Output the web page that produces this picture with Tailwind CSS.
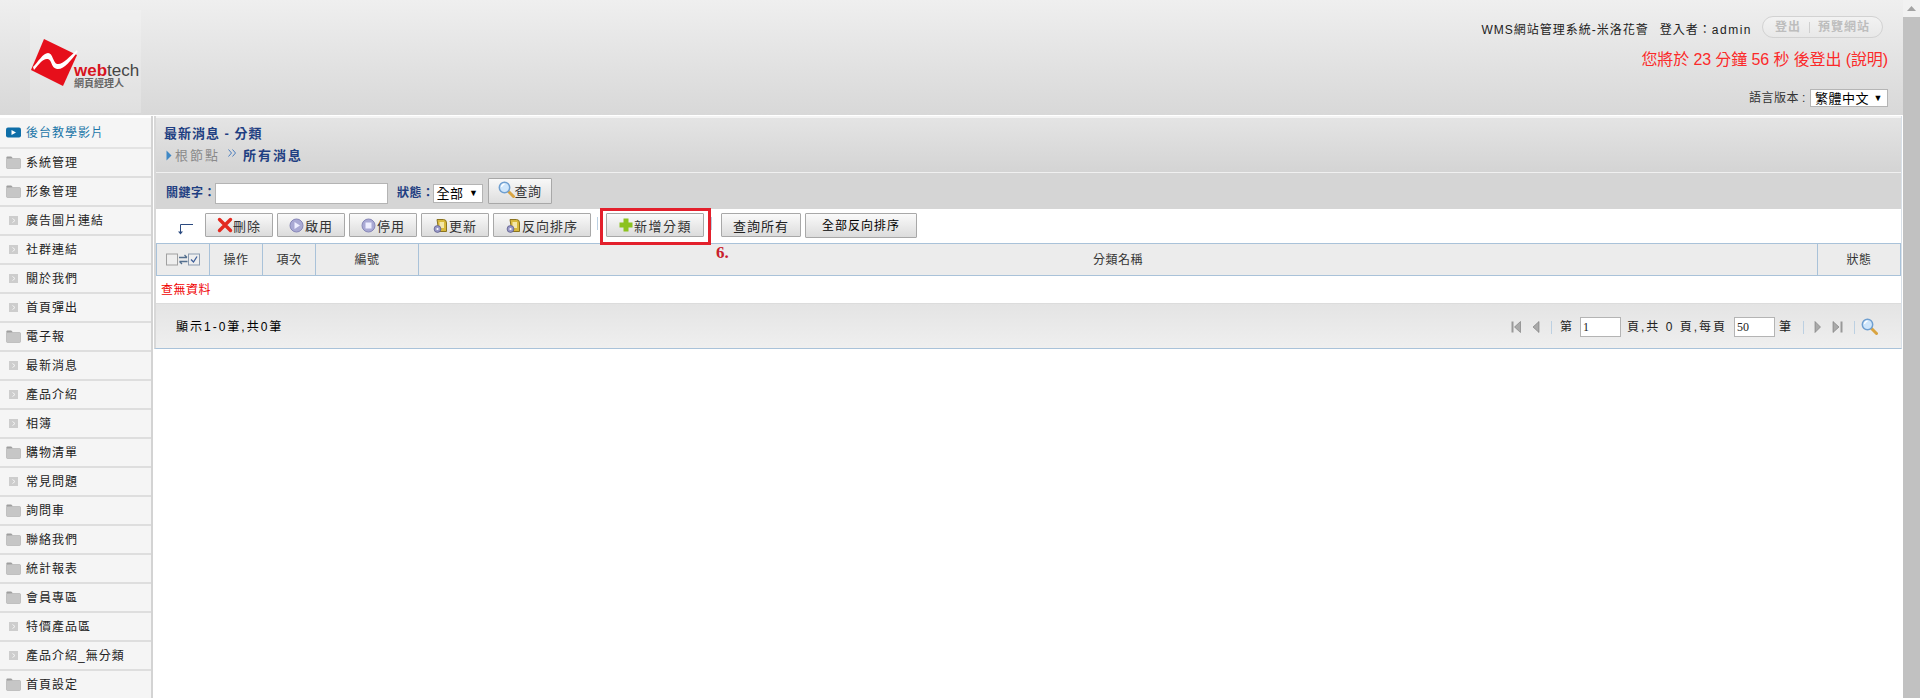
<!DOCTYPE html>
<html lang="zh-Hant">
<head>
<meta charset="utf-8">
<script src="https://cdn.jsdelivr.net/npm/@tailwindcss/browser@4"></script>
<title>WMS</title>
</head>
<body class="font-['Liberation_Sans','Noto_Sans_CJK_TC',sans-serif] text-[12px] leading-none text-black bg-white">
<svg width="0" height="0" class="absolute">
  <defs>
    <symbol id="folder" viewBox="0 0 15 13"><path d="M0.500 3V1.200Q0.500 0.500 1.200 0.500H5Q5.600 0.500 6 1.200L6.600 2.500Z" fill="#9e9e9e"/><rect x="0.500" y="2.500" width="14" height="10" rx="1" fill="#c6c6c6" stroke="#adadad" stroke-width="0.600"/></symbol>
    <symbol id="doc" viewBox="0 0 9 9"><rect width="9" height="9" fill="#cdcdcd"/><path d="M3.500 2.500L6 4.500L3.500 6.500" fill="none" stroke="#f4f4f4" stroke-width="1"/></symbol>
    <symbol id="mag" viewBox="0 0 17 17"><path d="M10.500 10.500L15.500 15.500" stroke="#d9a441" stroke-width="3" stroke-linecap="round"/><circle cx="6.500" cy="6.500" r="5.200" fill="#cfe6fb" stroke="#6f9fd0" stroke-width="1.500"/><path d="M3.500 6Q4 3.500 6.500 3.200" stroke="#fff" stroke-width="1.200" fill="none"/></symbol>
    <symbol id="gold" viewBox="0 0 15 15"><path d="M4 1.500H10.500Q13.500 1.500 13.500 5V13.500H5V8Z" fill="#d9b93c" stroke="#8a7320" stroke-width="1"/><path d="M6.500 4H11V10H6.500Z" fill="#f4e7a8"/><circle cx="4.500" cy="11" r="3.400" fill="#9a9ac8" stroke="#5c5c8c" stroke-width="0.800"/><circle cx="4.500" cy="11" r="1.100" fill="#fff"/></symbol>
  </defs>
</svg>
<div class="flex h-[698px] overflow-hidden">
  <div class="relative w-[1903px] shrink-0 flex flex-col">
    <!-- header -->
    <header class="h-[115px] shrink-0 flex justify-between bg-gradient-to-b from-[#efefef] to-[#d8d8d8]">
      <div class="ml-[30px] mt-[10px] w-[111px] h-[103px] bg-white/20 relative">
        <svg viewBox="0 0 111 103" class="w-[111px] h-[103px]">
          <path d="M14 29L47 45L33 76L1 60Z" fill="#e60f1b"/>
          <path d="M3 57C8 52 13 43 18 43C23 43 23 53 27 54C33 55 39 47 47 40L47.500 42C41 50 34 60 27 59C21 58 22 50 18 49C13 48 9 54 4 60Z" fill="#fff"/>
          <text x="44" y="66" font-family="Liberation Sans" font-size="17" fill="#444"><tspan font-weight="700" fill="#d8141e">web</tspan><tspan>tech</tspan></text>
          <text x="44" y="77" font-family="Noto Sans CJK TC" font-size="10" font-weight="700" fill="#666">網頁經理人</text>
        </svg>
      </div>
      <div class="w-[440px] mr-[15px] flex flex-col items-end">
        <div class="mt-[16px] h-[22px] flex items-center pr-[5px] text-[#222]">
          <span class="mt-[6px] tracking-[1px]">WMS</span><span class="mt-[6px] tracking-[1px]">網站管理系統-米洛花薈</span><span class="mt-[6px] ml-[11px] tracking-[1px]">登入者：</span><span class="mt-[6px] tracking-[1.500px]">admin</span>
          <div class="ml-[10px] w-[121px] h-[22px] rounded-full border border-[#d2d2d2] bg-gradient-to-b from-[#f2f2f2] to-[#e8e8e8] flex items-center justify-center text-[#bdbdbd] font-bold tracking-[1px]">
            <span>登出</span><span class="mx-[8px] w-px h-[11px] bg-[#cfcfcf]"></span><span>預覽網站</span>
          </div>
        </div>
        <div class="mt-[12px] text-[16px] text-[#fb2a2a] leading-[20px] tracking-[-0.1px]">您將於 23 分鐘 56 秒 後登出 (說明)</div>
        <div class="mt-[19px] flex items-center">
          <span class="tracking-[0.5px] text-[#333]">語言版本</span><span class="ml-[3px] w-[4px] text-[#333]">:</span>
          <div class="ml-[4px] w-[78px] h-[18px] bg-white border border-[#b5b5b5] flex items-center justify-between px-[4px] text-[13px] tracking-[0.5px]">繁體中文<span class="text-[9px]">▼</span></div>
        </div>
      </div>
    </header>
    <div class="flex-1 flex min-h-0">
      <!-- sidebar -->
      <nav class="w-[154px] shrink-0 pt-[1px] overflow-hidden bg-white">
        <div class="w-[153px] border-r-2 border-[#d3d3d3] bg-[#f5f5f5] flex flex-col tracking-[1px] text-[#222]">
          <a class="h-[33px] border-y-2 border-[#e3e3e3] border-t-white flex items-center pl-[6px] text-[#1b75a8]"><svg width="15" height="11" viewBox="0 0 15 11" class="mr-[5px]"><rect width="15" height="10" y="0.500" rx="2" fill="#0e6ea8"/><path d="M5.500 3L10 5.500L5.500 8Z" fill="#fff"/></svg>後台教學影片</a>
          <a class="h-[29px] border-b-2 border-[#dedede] flex items-center pl-[6px]"><svg width="15" height="13" class="mr-[5px]"><use href="#folder"/></svg>系統管理</a>
          <a class="h-[29px] border-b-2 border-[#dedede] flex items-center pl-[6px]"><svg width="15" height="13" class="mr-[5px]"><use href="#folder"/></svg>形象管理</a>
          <a class="h-[29px] border-b-2 border-[#dedede] flex items-center pl-[9px]"><svg width="9" height="9" class="mr-[8px]"><use href="#doc"/></svg>廣告圖片連結</a>
          <a class="h-[29px] border-b-2 border-[#dedede] flex items-center pl-[9px]"><svg width="9" height="9" class="mr-[8px]"><use href="#doc"/></svg>社群連結</a>
          <a class="h-[29px] border-b-2 border-[#dedede] flex items-center pl-[9px]"><svg width="9" height="9" class="mr-[8px]"><use href="#doc"/></svg>關於我們</a>
          <a class="h-[29px] border-b-2 border-[#dedede] flex items-center pl-[9px]"><svg width="9" height="9" class="mr-[8px]"><use href="#doc"/></svg>首頁彈出</a>
          <a class="h-[29px] border-b-2 border-[#dedede] flex items-center pl-[6px]"><svg width="15" height="13" class="mr-[5px]"><use href="#folder"/></svg>電子報</a>
          <a class="h-[29px] border-b-2 border-[#dedede] flex items-center pl-[9px]"><svg width="9" height="9" class="mr-[8px]"><use href="#doc"/></svg>最新消息</a>
          <a class="h-[29px] border-b-2 border-[#dedede] flex items-center pl-[9px]"><svg width="9" height="9" class="mr-[8px]"><use href="#doc"/></svg>產品介紹</a>
          <a class="h-[29px] border-b-2 border-[#dedede] flex items-center pl-[9px]"><svg width="9" height="9" class="mr-[8px]"><use href="#doc"/></svg>相簿</a>
          <a class="h-[29px] border-b-2 border-[#dedede] flex items-center pl-[6px]"><svg width="15" height="13" class="mr-[5px]"><use href="#folder"/></svg>購物清單</a>
          <a class="h-[29px] border-b-2 border-[#dedede] flex items-center pl-[9px]"><svg width="9" height="9" class="mr-[8px]"><use href="#doc"/></svg>常見問題</a>
          <a class="h-[29px] border-b-2 border-[#dedede] flex items-center pl-[6px]"><svg width="15" height="13" class="mr-[5px]"><use href="#folder"/></svg>詢問車</a>
          <a class="h-[29px] border-b-2 border-[#dedede] flex items-center pl-[6px]"><svg width="15" height="13" class="mr-[5px]"><use href="#folder"/></svg>聯絡我們</a>
          <a class="h-[29px] border-b-2 border-[#dedede] flex items-center pl-[6px]"><svg width="15" height="13" class="mr-[5px]"><use href="#folder"/></svg>統計報表</a>
          <a class="h-[29px] border-b-2 border-[#dedede] flex items-center pl-[6px]"><svg width="15" height="13" class="mr-[5px]"><use href="#folder"/></svg>會員專區</a>
          <a class="h-[29px] border-b-2 border-[#dedede] flex items-center pl-[9px]"><svg width="9" height="9" class="mr-[8px]"><use href="#doc"/></svg>特價產品區</a>
          <a class="h-[29px] border-b-2 border-[#dedede] flex items-center pl-[9px]"><svg width="9" height="9" class="mr-[8px]"><use href="#doc"/></svg>產品介紹_無分類</a>
          <a class="h-[29px] border-b-2 border-[#dedede] flex items-center pl-[6px]"><svg width="15" height="13" class="mr-[5px]"><use href="#folder"/></svg>首頁設定</a>
        </div>
      </nav>
      <!-- main -->
      <main class="flex-1 min-w-0 pr-[1px] pt-[1px]">
        <div class="h-[233px] border-l-2 border-[#d8d8d8] border-b-[1px] border-b-[#a9c2d9] border-r border-r-[#d8e0e8] flex flex-col">
          <div class="h-[56px] shrink-0 border-t-2 border-[#f4f4f4] bg-gradient-to-b from-[#e4e4e4] to-[#d4d4d4] pl-[8px] text-[#1f3f82] font-bold tracking-[1px]">
            <div class="mt-[8px] text-[13px] leading-[15px]">最新消息 - 分類</div>
            <div class="mt-[7px] flex items-center text-[13px] leading-[15px]">
              <svg width="6" height="11" viewBox="0 0 6 11" class="ml-[2px] mr-[3px]"><path d="M0.500 0.500L5.500 5.500L0.500 10.500Z" fill="#3f88c5"/></svg>
              <span class="font-normal text-[#8a8a8a] tracking-[2px]">根節點</span>
              <svg width="9" height="8" viewBox="0 0 9 8" class="ml-[8px] mr-[6px] -mt-[5px]"><path d="M0.500 0.500L3.500 4L0.500 7.500M4.500 0.500L7.500 4L4.500 7.500" fill="none" stroke="#4b7dbd" stroke-width="1"/></svg>
              <span class="tracking-[2px]">所有消息</span>
            </div>
          </div>
          <div class="h-[37px] shrink-0 border-t border-[#f0f0f0] bg-[#d5d5d5] flex items-start pl-[10px] text-[#1f3f82] font-bold tracking-[0.5px]">
            <span class="mt-[14px]">關鍵字：</span>
            <div class="mt-[10px] w-[173px] h-[21px] -ml-[1px] bg-white border border-[#b4b4b4]"></div>
            <span class="mt-[14px] ml-[9px]">狀態：</span>
            <div class="mt-[11px] w-[50px] h-[19px] -ml-[2px] bg-white border border-[#b4b4b4] flex items-center justify-between px-[3px] text-[13px] text-black font-normal">全部<span class="text-[9px]">▼</span></div>
            <button class="mt-[5px] ml-[5px] w-[64px] h-[26px] border border-[#a8a8a8] rounded-[1px] bg-gradient-to-b from-[#f8f8f8] to-[#dedede] flex items-center justify-center text-[#333] font-normal text-[13px] tracking-[0.5px]"><svg width="17" height="17" class="-mt-[4px]"><use href="#mag"/></svg>查詢</button>
          </div>
          <div class="relative h-[34px] shrink-0 bg-white flex items-start pt-[4px] tracking-[1px] text-[13px] text-[#333]">
            <svg width="17" height="12" viewBox="0 0 17 12" class="ml-[21px] mt-[10px] mr-[11px]"><path d="M16 1.500H3.500V9" fill="none" stroke="#2b4a80" stroke-width="1"/><path d="M1 8.500H6L3.500 11.500Z" fill="#2b4a80"/></svg>
            <button class="w-[68px] h-[24px] pt-[2px] border border-[#a8a8a8] rounded-[1px] bg-gradient-to-b from-[#fafafa] to-[#dcdcdc] flex items-center justify-center"><svg width="16" height="16" viewBox="0 0 16 16" class="-mt-[2px]"><path d="M2.500 2.500L13.500 13.500M13.500 2.500L2.500 13.500" stroke="#e32a20" stroke-width="3.400" stroke-linecap="round"/></svg>刪除</button>
            <button class="ml-[4px] w-[68px] h-[24px] pt-[2px] border border-[#a8a8a8] rounded-[1px] bg-gradient-to-b from-[#fafafa] to-[#dcdcdc] flex items-center justify-center"><svg width="15" height="15" viewBox="0 0 15 15" class="mr-[1px] -mt-[2px]"><circle cx="7.500" cy="7.500" r="6.500" fill="#a9a9d4" stroke="#8787b8"/><path d="M5.500 4L11 7.500L5.500 11Z" fill="#eef" /></svg>啟用</button>
            <button class="ml-[4px] w-[68px] h-[24px] pt-[2px] border border-[#a8a8a8] rounded-[1px] bg-gradient-to-b from-[#fafafa] to-[#dcdcdc] flex items-center justify-center"><svg width="15" height="15" viewBox="0 0 15 15" class="mr-[1px] -mt-[2px]"><circle cx="7.500" cy="7.500" r="6.500" fill="#a9a9d4" stroke="#8787b8"/><rect x="4.500" y="4.500" width="6" height="6" fill="#eef"/></svg>停用</button>
            <button class="ml-[4px] w-[68px] h-[24px] pt-[2px] border border-[#a8a8a8] rounded-[1px] bg-gradient-to-b from-[#fafafa] to-[#dcdcdc] flex items-center justify-center"><svg width="15" height="15" class="mr-[1px] -mt-[2px]"><use href="#gold"/></svg>更新</button>
            <button class="ml-[4px] w-[98px] h-[24px] pt-[2px] border border-[#a8a8a8] rounded-[1px] bg-gradient-to-b from-[#fafafa] to-[#dcdcdc] flex items-center justify-center"><svg width="15" height="15" class="mr-[1px] -mt-[2px]"><use href="#gold"/></svg>反向排序</button>
            <span class="ml-[6px] mt-[4px] w-px h-[13px] bg-[#bcd0e2]"></span>
            <button class="ml-[8px] w-[98px] h-[24px] pt-[2px] border border-[#a8a8a8] rounded-[1px] bg-gradient-to-b from-[#fafafa] to-[#dcdcdc] flex items-center justify-center tracking-[1.500px]"><svg width="16" height="16" viewBox="0 0 16 16" class="-mt-[2px]"><path d="M8 1.500V14.500M1.500 8H14.500" stroke="#8cc21f" stroke-width="5"/></svg>新增分類</button>
            <span class="ml-[7px] mt-[4px] w-px h-[13px] bg-[#bcd0e2]"></span>
            <button class="ml-[9px] w-[80px] h-[24px] pt-[2px] border border-[#a8a8a8] rounded-[1px] bg-gradient-to-b from-[#fafafa] to-[#dcdcdc] text-[#222]">查詢所有</button>
            <button class="ml-[4px] w-[112px] h-[25px] border border-[#a8a8a8] rounded-[1px] bg-gradient-to-b from-[#fafafa] to-[#dcdcdc] text-black text-[12px]">全部反向排序</button>
            <div class="absolute left-[444px] top-[-1px] w-[111px] h-[37px] border-[3px] border-[#e3202c]"></div>
            <span class="absolute left-[560px] top-[35px] text-[17px] font-bold text-[#c8202c] font-['Liberation_Serif',serif] tracking-normal">6.</span>
          </div>
          <div class="h-[33px] shrink-0 bg-[#ececec] border-y border-[#a9c2d9] border-x flex items-center text-center text-[#333] tracking-[0.5px]">
            <div class="w-[53px] h-full border-r border-[#a9c2d9] flex items-center justify-center">
              <svg width="34" height="13" viewBox="0 0 34 13"><rect x="0.500" y="1" width="11" height="11" fill="#eee" stroke="#a0a0a0"/><path d="M13 4.500H21M18.500 2L21 4.500M21.500 8.500H13.500M16 11L13.500 8.500" fill="none" stroke="#55708f" stroke-width="1.300"/><rect x="22.500" y="1" width="11" height="11" fill="#eee" stroke="#8b9bb0"/><path d="M25 6.500L27.500 9L31 3.500" fill="none" stroke="#3f5f9a" stroke-width="1.300"/></svg>
            </div>
            <div class="w-[53px] h-full border-r border-[#a9c2d9] flex items-center justify-center">操作</div>
            <div class="w-[53px] h-full border-r border-[#a9c2d9] flex items-center justify-center">項次</div>
            <div class="w-[103px] h-full border-r border-[#a9c2d9] flex items-center justify-center">編號</div>
            <div class="flex-1 h-full border-r border-[#a9c2d9] flex items-center justify-center">分類名稱</div>
            <div class="w-[82px] h-full flex items-center justify-center">狀態</div>
          </div>
          <div class="h-[27px] shrink-0 pl-[5px] flex items-center bg-white text-[#f00000] tracking-[0.5px]">查無資料</div>
          <div class="h-px shrink-0 bg-[#dcdcdc]"></div>
          <div class="flex-1 bg-gradient-to-b from-[#e4e4e4] to-[#efefef] flex items-center justify-between pt-[2px] pl-[20px] pr-[23px] text-[#222] tracking-[1px]">
            <span class="tracking-[2px] text-black">顯示1-0筆,共0筆</span>
            <div class="flex items-center">
              <svg width="11" height="12" viewBox="0 0 11 12"><rect x="0.500" y="0.500" width="2" height="11" fill="#999"/><path d="M9.500 0.500L3.500 6L9.500 11.500Z" fill="#aaa" stroke="#777" stroke-width="0.600"/></svg>
              <svg width="8" height="12" viewBox="0 0 8 12" class="ml-[10px]"><path d="M7 0.500L1 6L7 11.500Z" fill="#aaa" stroke="#777" stroke-width="0.600"/></svg>
              <span class="ml-[11px] w-px h-[13px] bg-[#bcd0e2]"></span>
              <span class="ml-[8px]">第</span>
              <div class="ml-[7px] w-[41px] h-[20px] bg-white border border-[#b4b4b4] px-[2px] flex items-center font-['Liberation_Serif',serif] tracking-normal">1</div>
              <span class="ml-[6px] tracking-[2px]">頁,共 0 頁,每頁</span>
              <div class="ml-[7px] w-[41px] h-[20px] bg-white border border-[#b4b4b4] px-[2px] flex items-center font-['Liberation_Serif',serif] tracking-normal">50</div>
              <span class="ml-[4px]">筆</span>
              <span class="ml-[11px] w-px h-[13px] bg-[#bcd0e2]"></span>
              <svg width="7" height="12" viewBox="0 0 7 12" class="ml-[10px]"><path d="M1 0.500L6.500 6L1 11.500Z" fill="#aaa" stroke="#777" stroke-width="0.600"/></svg>
              <svg width="11" height="12" viewBox="0 0 11 12" class="ml-[11px]"><path d="M1 0.500L7 6L1 11.500Z" fill="#aaa" stroke="#777" stroke-width="0.600"/><rect x="8.500" y="0.500" width="2" height="11" fill="#999"/></svg>
              <span class="ml-[11px] w-px h-[13px] bg-[#bcd0e2]"></span>
              <svg width="17" height="17" class="ml-[6px] -mt-[2px]"><use href="#mag"/></svg>
            </div>
          </div>
        </div>
      </main>
    </div>
  </div>
  <!-- scrollbar -->
  <div class="w-[17px] shrink-0 bg-[#f1f1f1] flex flex-col">
    <div class="h-[17px] flex items-center justify-center"><svg width="9" height="5" viewBox="0 0 9 5"><path d="M0 5L4.500 0L9 5Z" fill="#a3a3a3"/></svg></div>
    <div class="flex-1 bg-[#c1c1c1]"></div>
  </div>
</div>
</body>
</html>
